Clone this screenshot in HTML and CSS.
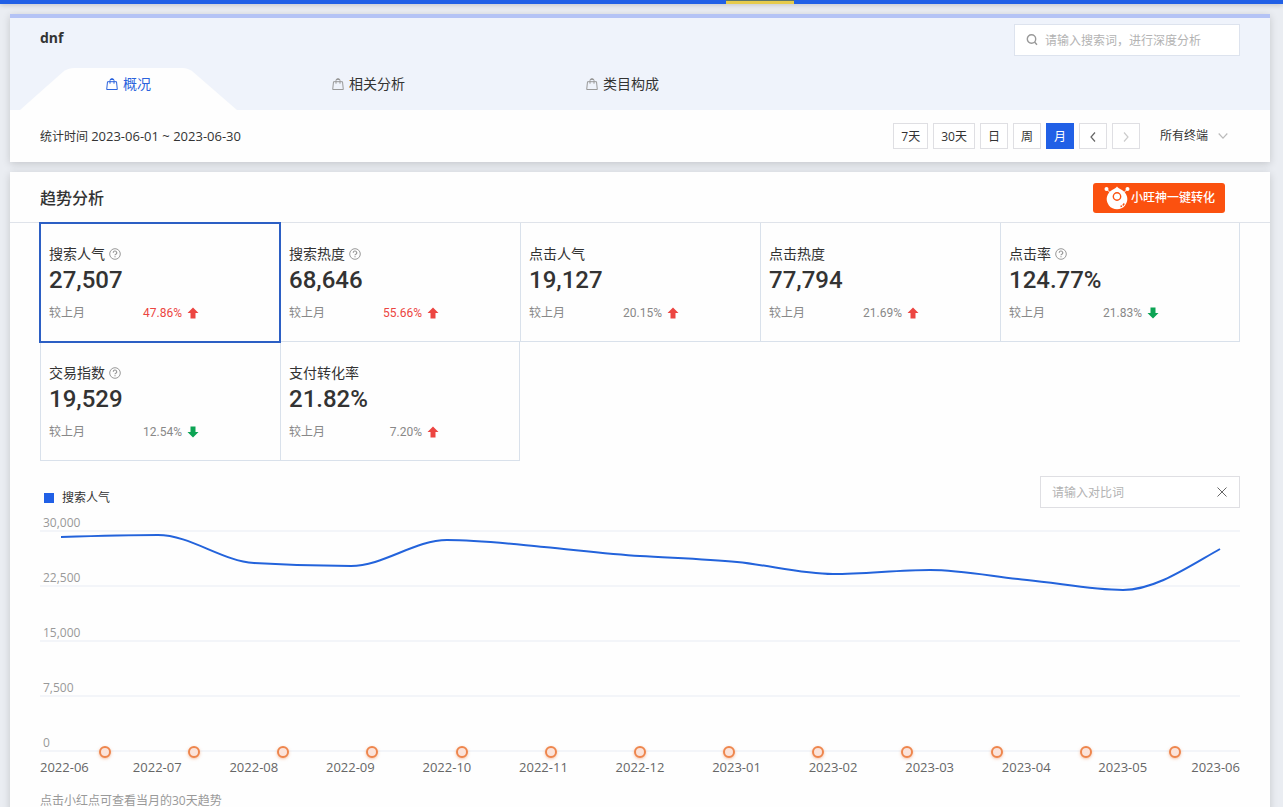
FILE: index.html
```html
<!DOCTYPE html>
<html lang="zh-CN">
<head>
    <meta charset="UTF-8">
    <meta name="viewport" content="width=device-width, initial-scale=1.0">
    <title>搜索分析</title>
    <link rel="stylesheet" href="styles.css">
</head>
<body>
    <svg class="sprite" aria-hidden="true">
        <symbol id="bag" viewBox="0 0 12 12"><path d="M1.500 3.700h9l.8 7.800H.7zM4 5.700V2.600a2 2 0 0 1 4 0v3.100M4 1.500h4" fill="none" stroke="currentColor"/></symbol>
        <symbol id="help" viewBox="0 0 12 12"><circle cx="6" cy="6" r="5.3" fill="none" stroke="currentColor"/><path d="M4.3 4.8a1.7 1.7 0 1 1 2.5 1.4c-.6.3-.8.5-.8 1.1M6 8.3v1" fill="none" stroke="currentColor" stroke-width="1.200"/></symbol>
        <symbol id="arrow" viewBox="0 0 12 12"><path d="M6 .5 11.500 6H8.500v5.500h-5V6H.5z" fill="currentColor"/></symbol>
    </svg>
    <header class="topbar"><span class="topbar-mark"></span></header>
    <main>
        <section class="card overview">
            <div class="overview-head">
                <div class="title-row">
                    <h1>dnf</h1>
                    <label class="search">
                        <svg width="14" height="14" viewBox="0 0 14 14" aria-hidden="true"><circle cx="6.500" cy="6" r="4.200"/><path d="M9.500 9 12 11.800"/></svg>
                        <input type="text" placeholder="请输入搜索词，进行深度分析" aria-label="搜索词">
                    </label>
                </div>
                <nav class="tabs">
                    <a class="tab active" href="#overview">
                        <svg class="tab-shape" viewBox="0 0 218 42" preserveAspectRatio="none" aria-hidden="true"><path d="M0 42 43 4Q48 0 55 0H163Q169 0 174 4L218 42Z"/></svg>
                        <svg class="bag" aria-hidden="true"><use href="#bag"/></svg><span>概况</span>
                    </a>
                    <a class="tab" href="#related"><svg class="bag" aria-hidden="true"><use href="#bag"/></svg><span>相关分析</span></a>
                    <a class="tab" href="#category"><svg class="bag" aria-hidden="true"><use href="#bag"/></svg><span>类目构成</span></a>
                </nav>
            </div>
            <div class="filters">
                <p class="period">统计时间 <span class="num">2023-06-01 ~ 2023-06-30</span></p>
                <div class="ranges">
                    <button type="button">7天</button>
                    <button type="button">30天</button>
                    <button type="button">日</button>
                    <button type="button">周</button>
                    <button type="button" class="active">月</button>
                    <button type="button" aria-label="上一月"><svg width="8" height="10" viewBox="0 0 8 10"><path d="M6 .5 2 5l4 4.500"/></svg></button>
                    <button type="button" aria-label="下一月" disabled><svg width="8" height="10" viewBox="0 0 8 10"><path d="M2 .5 6 5 2 9.500"/></svg></button>
                </div>
                <div class="terminal">
                    <select aria-label="终端"><option>所有终端</option></select>
                    <svg width="10" height="8" viewBox="0 0 10 8" aria-hidden="true"><path d="M.7 1.500 5 6.200l4.300-4.700"/></svg>
                </div>
            </div>
        </section>

        <section class="card trend">
            <div class="trend-head">
                <h2>趋势分析</h2>
                <button type="button" class="convert">
                    <svg width="26" height="24" viewBox="0 0 26 24" aria-hidden="true">
                        <path d="M2.500 3 7 7.500M23.500 3 19 7.500" stroke="#fff"/>
                        <circle cx="2.500" cy="3" r="2" fill="#fff"/><circle cx="23.500" cy="3" r="2" fill="#fff"/>
                        <path d="M13 .5c1 1.700 2.500 2.200 4.500 3.300a10.300 10.300 0 1 1-9 0C10.500 2.700 12 2.200 13 .5z" fill="#fff"/>
                        <circle cx="13" cy="10.500" r="3.700" fill="none" stroke="#fb510f" stroke-width="1.400"/>
                        <path d="M16.500 20.500l1.500-.5M18.800 19.500l1.500-2" stroke="#fb510f" stroke-width="1.400" fill="none"/>
                    </svg>
                    <span>小旺神一键转化</span>
                </button>
            </div>
            <div class="trend-body">
                <div class="metrics">
                    <button type="button" class="metric active">
                        <span class="name">搜索人气<svg class="help" aria-hidden="true"><use href="#help"/></svg></span>
                        <strong>27,507</strong>
                        <span class="compare">较上月<em class="hot">47.86%</em><svg class="arrow up" aria-hidden="true"><use href="#arrow"/></svg></span>
                    </button>
                    <button type="button" class="metric">
                        <span class="name">搜索热度<svg class="help" aria-hidden="true"><use href="#help"/></svg></span>
                        <strong>68,646</strong>
                        <span class="compare">较上月<em class="hot">55.66%</em><svg class="arrow up" aria-hidden="true"><use href="#arrow"/></svg></span>
                    </button>
                    <button type="button" class="metric">
                        <span class="name">点击人气</span>
                        <strong>19,127</strong>
                        <span class="compare">较上月<em>20.15%</em><svg class="arrow up" aria-hidden="true"><use href="#arrow"/></svg></span>
                    </button>
                    <button type="button" class="metric">
                        <span class="name">点击热度</span>
                        <strong>77,794</strong>
                        <span class="compare">较上月<em>21.69%</em><svg class="arrow up" aria-hidden="true"><use href="#arrow"/></svg></span>
                    </button>
                    <button type="button" class="metric last">
                        <span class="name">点击率<svg class="help" aria-hidden="true"><use href="#help"/></svg></span>
                        <strong>124.77%</strong>
                        <span class="compare">较上月<em>21.83%</em><svg class="arrow down" aria-hidden="true"><use href="#arrow"/></svg></span>
                    </button>
                    <button type="button" class="metric">
                        <span class="name">交易指数<svg class="help" aria-hidden="true"><use href="#help"/></svg></span>
                        <strong>19,529</strong>
                        <span class="compare">较上月<em>12.54%</em><svg class="arrow down" aria-hidden="true"><use href="#arrow"/></svg></span>
                    </button>
                    <button type="button" class="metric last">
                        <span class="name">支付转化率</span>
                        <strong>21.82%</strong>
                        <span class="compare">较上月<em>7.20%</em><svg class="arrow up" aria-hidden="true"><use href="#arrow"/></svg></span>
                    </button>
                </div>

                <div class="chart-head">
                    <span class="legend">搜索人气</span>
                    <div class="contrast">
                        <input type="text" placeholder="请输入对比词" aria-label="对比词">
                        <button type="button" aria-label="清空"><svg width="10" height="10" viewBox="0 0 10 10"><path d="M.5.5l9 9M9.500.5l-9 9"/></svg></button>
                    </div>
                </div>

                <div class="chart">
                    <div class="grid-row">30,000</div>
                    <div class="grid-row">22,500</div>
                    <div class="grid-row">15,000</div>
                    <div class="grid-row">7,500</div>
                    <div class="grid-row">0</div>
                    <svg class="line" viewBox="0 0 1200 220" preserveAspectRatio="none" role="img" aria-label="搜索人气">
                        <path d="M21 6C53 5 86 4 118 4C150 4 182 30 214 32C246 34 279 35 311 35C343 35 375 9 407 9C439 9 472 13 504 16C536 19 568 23 600 25C632 27 665 28 697 31C729 34 761 43 793 43C825 43 858 39 890 39C922 39 955 46 987 49C1019 52 1051 59 1083 59C1115 59 1148 36 1180 18"/>
                    </svg>
                    <div class="dots">
                        <i></i><i></i><i></i><i></i><i></i><i></i><i></i><i></i><i></i><i></i><i></i><i></i><i></i>
                    </div>
                </div>
                <div class="months">
                    <span>2022-06</span><span>2022-07</span><span>2022-08</span><span>2022-09</span><span>2022-10</span><span>2022-11</span><span>2022-12</span><span>2023-01</span><span>2023-02</span><span>2023-03</span><span>2023-04</span><span>2023-05</span><span>2023-06</span>
                </div>
                <p class="tip">点击小红点可查看当月的30天趋势</p>
            </div>
        </section>
    </main>
</body>
</html>
```
FILE: styles.css
```css
* {
    box-sizing: border-box;
}
body {
    margin: 0;
    background-color: #eaedf2;
    color: #333;
    font-family: "Open Sans", "Noto Sans CJK SC", sans-serif;
    font-size: 12px;
    line-height: 20px;
}
h1, h2, p {
    margin: 0;
}
button, input, select {
    font: inherit;
    color: inherit;
    padding: 0;
    border: 0;
    background: none;
    outline: none;
}
button {
    cursor: pointer;
}
svg {
    display: block;
    flex: none;
}
.sprite {
    position: absolute;
    width: 0;
    height: 0;
}
.topbar {
    display: flex;
    justify-content: center;
    height: 4px;
    padding-left: 237px;
    background-color: #2160e6;
    box-shadow: 0 1px 5px rgba(0,0,0,0.2);
}
.topbar-mark {
    width: 68px;
    background-color: #e6cb4c;
    border-top: 1px solid #5c7568;
}
main {
    display: flex;
    flex-direction: column;
    gap: 10px;
    padding: 10px 13px 0 10px;
}
.card {
    background-color: #fefefe;
    box-shadow: 0 2px 8px rgba(0,0,0,0.16);
}

/* overview */
.overview {
    border-top: 4px solid #b4c3f5;
}
.overview-head {
    padding-top: 6px;
    background-color: #eff3fb;
}
.title-row {
    display: flex;
    justify-content: space-between;
    padding: 0 30px;
}
h1 {
    font-size: 14px;
    line-height: 28px;
}
.search {
    display: flex;
    align-items: center;
    gap: 6px;
    width: 226px;
    height: 32px;
    padding: 0 10px;
    background-color: #fff;
    border: 1px solid #dde3ee;
}
.search svg {
    fill: none;
    stroke: #999;
    stroke-width: 1.4;
}
.search input,
.contrast input {
    flex: 1;
    min-width: 0;
    padding-top: 2px;
}
input::placeholder {
    color: #b3b3b3;
    opacity: 1;
}
.tabs {
    display: flex;
    gap: 9px;
    margin-top: 12px;
    padding-left: 10px;
}
.tab {
    display: flex;
    align-items: center;
    gap: 5px;
    height: 42px;
    padding: 0 86px 10px;
    position: relative;
    color: #333;
    font-size: 14px;
    text-decoration: none;
}
.tab span {
    position: relative;
}
.tab.active {
    color: #2b63dd;
}
.tab-shape {
    position: absolute;
    left: 0;
    top: 0;
    width: 100%;
    height: 100%;
    fill: #fefefe;
}
.bag {
    position: relative;
    width: 12px;
    height: 12px;
    color: #999;
}
.active .bag {
    color: #2b63dd;
}
.filters {
    display: flex;
    align-items: center;
    height: 52px;
    padding: 0 30px;
}
.num {
    font-size: 13px;
}
.ranges {
    display: flex;
    gap: 5px;
    margin-left: auto;
}
.ranges button {
    display: flex;
    align-items: center;
    justify-content: center;
    min-width: 28px;
    height: 26px;
    padding: 1px 7px 0;
    border: 1px solid #dfdfe3;
    background-color: #fff;
}
.ranges .active {
    background-color: #2160e6;
    border-color: #2160e6;
    color: #fff;
}
.ranges svg {
    fill: none;
    stroke: #666;
    stroke-width: 1.2;
}
.ranges button:disabled svg {
    stroke: #ccc;
}
.terminal {
    display: flex;
    align-items: center;
    margin-left: 20px;
    padding-right: 12px;
}
.terminal select {
    width: 58px;
    appearance: none;
    cursor: pointer;
}
.terminal svg {
    fill: none;
    stroke: #bbb;
    stroke-width: 1.2;
}

/* trend */
.trend-head {
    display: flex;
    align-items: center;
    justify-content: space-between;
    height: 51px;
    padding: 1px 45px 0 30px;
    border-bottom: 1px solid #dfe3ea;
}
h2 {
    font-size: 16px;
    font-weight: 500;
}
.convert {
    display: flex;
    align-items: center;
    gap: 1px;
    height: 30px;
    padding: 0 10px 0 11px;
    border-radius: 3px;
    background-color: #fb510f;
    color: #fff;
    font-weight: 500;
}
.trend-body {
    padding: 0 30px 10px;
}
.metrics {
    display: grid;
    grid-template-columns: repeat(5, 1fr);
}
.metric {
    display: flex;
    flex-direction: column;
    height: 119px;
    padding: 20px 8px 0;
    border-left: 1px solid #d9e1eb;
    border-bottom: 1px solid #d9e1eb;
    text-align: left;
}
.metric.last {
    border-right: 1px solid #d9e1eb;
}
.metric.active {
    outline: 2px solid #2c5fc4;
    outline-offset: -1px;
    z-index: 1;
}
.name {
    display: flex;
    align-items: center;
    gap: 4px;
    font-size: 14px;
    line-height: 22px;
}
.help {
    width: 12px;
    height: 12px;
    color: #999;
}
.metric strong {
    font-family: Roboto, sans-serif;
    font-size: 24px;
    font-weight: 500;
    line-height: 30px;
}
.compare {
    display: flex;
    align-items: center;
    gap: 5px;
    margin-top: 8px;
    color: #888;
}
.compare em {
    width: 92px;
    font-family: Roboto, sans-serif;
    font-style: normal;
    text-align: right;
}
.compare .hot {
    color: #ec4541;
}
.arrow {
    width: 12px;
    height: 12px;
}
.up {
    color: #ec4541;
}
.down {
    color: #0ca454;
    transform: rotate(180deg);
}
.chart-head {
    display: flex;
    align-items: flex-end;
    justify-content: space-between;
    margin-top: 15px;
}
.legend {
    display: flex;
    align-items: center;
    gap: 8px;
    padding-left: 4px;
}
.legend::before {
    content: "";
    width: 10px;
    height: 10px;
    background-color: #2160e6;
}
.contrast {
    display: flex;
    align-items: center;
    width: 200px;
    height: 32px;
    padding: 0 12px 0 11px;
    border: 1px solid #dfdfe3;
    background-color: #fff;
}
.contrast svg {
    stroke: #666;
}
.chart {
    position: relative;
}
.grid-row {
    display: flex;
    align-items: flex-end;
    height: 55px;
    padding-left: 3px;
    border-bottom: 2px solid #f3f5f9;
    color: #999;
    line-height: 14px;
}
.grid-row:first-child {
    height: 24px;
}
.line {
    position: absolute;
    left: 0;
    bottom: 1px;
    width: 100%;
    height: 220px;
    overflow: visible;
    fill: none;
    stroke: #2363db;
    stroke-width: 2;
}
.dots {
    display: flex;
    justify-content: space-between;
    position: absolute;
    left: 59px;
    right: 59px;
    bottom: -6px;
}
.dots i {
    width: 12px;
    height: 12px;
    border: 2px solid #ee864d;
    border-radius: 50%;
    background-color: #fbe3da;
    box-shadow: 0 1px 3px rgba(238,134,77,0.5);
}
.months {
    display: grid;
    grid-template-columns: 69px repeat(11, 1fr) 69px;
    margin-top: 5px;
    color: #666;
    font-size: 13px;
    text-align: center;
}
.months span:first-child {
    text-align: left;
}
.months span:last-child {
    text-align: right;
}
.tip {
    margin-top: 14px;
    color: #999;
}
```
